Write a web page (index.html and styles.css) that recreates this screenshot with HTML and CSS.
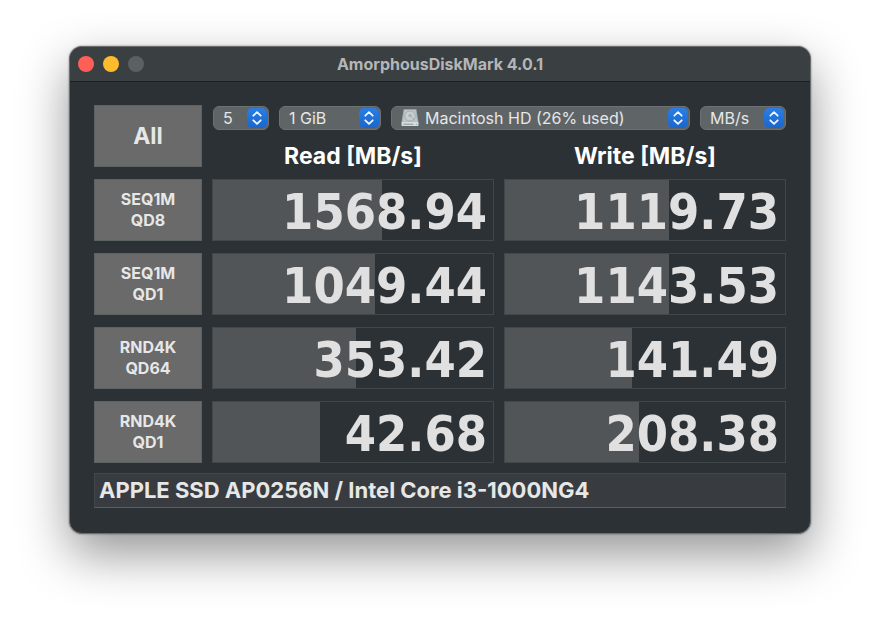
FILE: index.html
```html
<!DOCTYPE html>
<html lang="en">
<head>
    <meta charset="UTF-8">
    <meta name="viewport" content="width=device-width, initial-scale=1.0">
    <title>AmorphousDiskMark 4.0.1</title>
    <link rel="stylesheet" href="styles.css">
</head>
<body>
    <!-- shared icons -->
    <svg class="sprite" aria-hidden="true">
        <symbol id="updown" viewBox="0 0 20 20">
            <path d="M6.3 7.7 10 4.2l3.7 3.5M6.3 12.3l3.7 3.5 3.7-3.5" fill="none" stroke="#f4f8ff" stroke-width="1.8" stroke-linecap="round" stroke-linejoin="round"/>
        </symbol>
    </svg>

    <main class="window">
        <header class="titlebar">
            <div class="lights">
                <button class="light close" aria-label="Close"></button>
                <button class="light minimize" aria-label="Minimize"></button>
                <button class="light zoom" aria-label="Zoom" disabled></button>
            </div>
            <h1>AmorphousDiskMark 4.0.1</h1>
        </header>

        <div class="content">
            <div class="grid">
                <button class="test all">All</button>
                <div class="top">
                    <div class="options">
                        <div class="popup count">
                            <select aria-label="Test count"><option>5</option></select>
                            <svg class="arrows"><use href="#updown"/></svg>
                        </div>
                        <div class="popup size">
                            <select aria-label="Test size"><option>1 GiB</option></select>
                            <svg class="arrows"><use href="#updown"/></svg>
                        </div>
                        <div class="popup volume">
                            <select aria-label="Volume"><option>Macintosh HD (26% used)</option></select>
                            <svg class="disk" viewBox="0 0 20 20" aria-hidden="true">
                                <path d="M3.6 1.3h12.8l2.1 13.2h-17z" fill="#a9b3b7"/>
                                <path d="M4.5 2h11l1.7 11.8H2.8z" fill="#bdc5c7"/>
                                <ellipse cx="10" cy="8" rx="5.3" ry="5" fill="#c9cfd0" stroke="#99a3a7" stroke-width=".7"/>
                                <ellipse cx="10" cy="7.6" rx="1.7" ry="1.4" fill="#a3adb1"/>
                                <path d="M10.5 8.2l4.2 4" stroke="#98a2a6" stroke-width=".8"/>
                                <rect x="1.5" y="14.1" width="17" height="4" rx=".8" fill="#d8dddf"/>
                                <path d="M3.3 16.2h10" stroke="#8b9498" stroke-width="1"/>
                                <circle cx="16.4" cy="16.2" r=".7" fill="#7eb5c4"/>
                            </svg>
                            <svg class="arrows"><use href="#updown"/></svg>
                        </div>
                        <div class="popup unit">
                            <select aria-label="Unit"><option>MB/s</option></select>
                            <svg class="arrows"><use href="#updown"/></svg>
                        </div>
                    </div>
                    <div class="headings">
                        <h2>Read [MB/s]</h2>
                        <h2>Write [MB/s]</h2>
                    </div>
                </div>

                <button class="test">SEQ1M<br>QD8</button>
                <div class="result"><div class="bar" style="width: 60.4%"></div><span>1568.94</span></div>
                <div class="result"><div class="bar" style="width: 58.4%"></div><span>1119.73</span></div>

                <button class="test">SEQ1M<br>QD1</button>
                <div class="result"><div class="bar" style="width: 57.9%"></div><span>1049.44</span></div>
                <div class="result"><div class="bar" style="width: 58.5%"></div><span>1143.53</span></div>

                <button class="test">RND4K<br>QD64</button>
                <div class="result"><div class="bar" style="width: 51.1%"></div><span>353.42</span></div>
                <div class="result"><div class="bar" style="width: 45.4%"></div><span>141.49</span></div>

                <button class="test">RND4K<br>QD1</button>
                <div class="result"><div class="bar" style="width: 38.1%"></div><span>42.68</span></div>
                <div class="result"><div class="bar" style="width: 47.9%"></div><span>208.38</span></div>
            </div>

            <input class="info" type="text" aria-label="Device info" value="APPLE SSD AP0256N / Intel Core i3-1000NG4">
        </div>
    </main>
</body>
</html>
```

FILE: styles.css
```css
* {
    box-sizing: border-box;
}
body {
    margin: 0;
    min-height: 100vh;
    padding: 46px 69px;
    background-color: #fff;
    color: #e6e7e7;
    font-family: Inter, "Liberation Sans", sans-serif;
}
h1, h2 {
    margin: 0;
}
button, select, input {
    font-family: inherit;
    color: inherit;
}
.sprite {
    display: none;
}

/* window */
.window {
    background-color: #2c3135;
    border: 1px solid #6b6e70;
    border-radius: 13px;
    overflow: hidden;
    box-shadow: 0 0 2px rgba(0, 0, 0, 0.5), 0 20px 50px rgba(0, 0, 0, 0.42);
}
.titlebar {
    display: grid;
    grid-template-columns: 1fr auto 1fr;
    align-items: center;
    height: 35px;
    padding: 0 8px;
    background-color: #3a3f41;
    border-bottom: 1px solid #1c1f21;
}
.titlebar h1 {
    font-size: 16px;
    font-weight: 700;
    line-height: 20px;
    padding-bottom: 1px;
    color: #b4b6b7;
}
.lights {
    display: flex;
    gap: 9px;
}
.light {
    width: 16px;
    height: 16px;
    padding: 0;
    border: 0;
    border-radius: 50%;
}
.close {
    background-color: #ff5f57;
}
.minimize {
    background-color: #fdbc2e;
}
.zoom {
    background-color: #5b6063;
}

/* test grid */
.content {
    padding: 23px 24px 25px;
}
.grid {
    display: grid;
    grid-template-columns: 108px 1fr 1fr;
    grid-auto-rows: 62px;
    gap: 12px 10px;
}
.test {
    padding: 0;
    background-color: #6a6a6a;
    border: 1px solid #5c6164;
    font-size: 16px;
    font-weight: 700;
    line-height: 21px;
}
.all {
    font-size: 23px;
}
.top {
    grid-column: span 2;
}
.headings {
    display: grid;
    grid-template-columns: 1fr 1fr;
    gap: 10px;
    margin-top: 11px;
    text-align: center;
}
.headings h2 {
    font-size: 23px;
    font-weight: 700;
    line-height: 30px;
    color: #fff;
}

/* popups */
.options {
    display: flex;
    gap: 10px;
    padding: 1px 0 0 1px;
}
.popup {
    position: relative;
}
.popup select {
    appearance: none;
    display: block;
    width: 100%;
    height: 24px;
    padding: 0 24px 0 9px;
    background-color: #5f6466;
    border: 1px solid #6d7173;
    border-radius: 6px;
    font-size: 16px;
    line-height: 22px;
}
.count {
    width: 56px;
}
.size {
    width: 102px;
}
.volume {
    flex: 1;
}
.unit {
    width: 86px;
}
.volume select {
    padding-left: 33px;
}
.disk {
    position: absolute;
    top: 2px;
    left: 9px;
    width: 20px;
    height: 20px;
    pointer-events: none;
}
.arrows {
    position: absolute;
    top: 2px;
    right: 2px;
    width: 20px;
    height: 20px;
    border-radius: 5px;
    background: linear-gradient(#2a7ee4, #1b66cc);
    pointer-events: none;
}

/* results */
.result {
    position: relative;
    padding-right: 6px;
    border: 1px solid #42474a;
    text-align: right;
    font-family: "DejaVu Sans Condensed", "DejaVu Sans", sans-serif;
    font-size: 50px;
    font-weight: 700;
    line-height: 64px;
    color: #e0e0e0;
}
.result span {
    position: relative;
}
.bar {
    position: absolute;
    top: 0;
    bottom: 0;
    left: 0;
    background-color: #525558;
}

.info {
    display: block;
    width: 100%;
    height: 35px;
    margin-top: 10px;
    padding: 0 4px 2px;
    background-color: #383c40;
    border: 1px solid #42474a;
    border-bottom-color: #5c6063;
    font-size: 22px;
    font-weight: 700;
}
```
